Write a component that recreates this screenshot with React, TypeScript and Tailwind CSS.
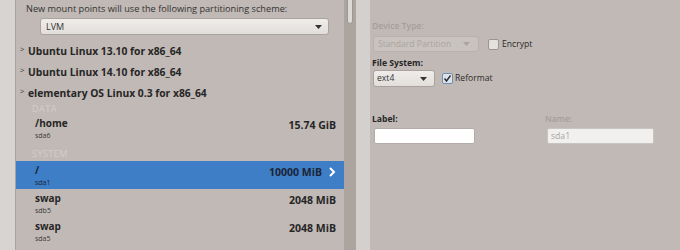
import React from 'react';

const Triangle = ({ className = '' }: { className?: string }) => (
    <svg width="7" height="4" viewBox="0 0 7 4" className={className}>
        <path d="M0 0 L7 0 L3.5 4 Z" fill="currentColor" />
    </svg>
);

const Expander = ({ title, top }: { title: string; top: string }) => (
    <div className={`flex items-center h-[21px] ${top}`}>
        <span className="w-[12px] pl-[4px] text-[8px] leading-none text-[#3a3a3a] -mt-[5px]">&gt;</span>
        <span className="text-[10.3px] font-bold text-[#262626]">{title}</span>
    </div>
);

interface Mount {
    name: string;
    dev: string;
    size: string;
    selected?: boolean;
}

const MountRow = ({ m }: { m: Mount }) => (
    <div className={`flex h-[28px] pl-[19px] ${m.selected ? 'bg-[#3d7ec7] text-[#1b2535]' : 'text-[#262626]'}`}>
        <div className="flex flex-col">
            <span className="text-[10px] font-bold leading-[13px] pt-[3px]">{m.name}</span>
            <span className={`mt-[1px] text-[7px] leading-[10px] ${m.selected ? 'text-[#1b2535]' : 'text-[#3a3a3a]'}`}>{m.dev}</span>
        </div>
        <div className="flex-1" />
        <div className="flex items-start pt-[4px] pr-[8px]">
            <span className="text-[10.5px] font-bold leading-[14px]">{m.size}</span>
            {m.selected && (
                <svg width="8" height="10" viewBox="0 0 8 10" className="ml-[6px] mt-[2px]">
                    <path d="M2 1 L6 5 L2 9" stroke="white" strokeWidth="2" fill="none" />
                </svg>
            )}
        </div>
    </div>
);

const Checkbox = ({ checked }: { checked?: boolean }) => (
    <div className={`w-[11px] h-[11px] rounded-[2px] border ${checked ? 'border-[#6f8fb3] bg-[#dde3ea]' : 'border-[#9b9491] bg-[#e4e0dd]'} flex items-center justify-center`}>
        {checked && (
            <svg width="9" height="9" viewBox="0 0 9 9">
                <path d="M1.5 4.5 L3.5 7 L7.5 1.5" stroke="#2b2b2b" strokeWidth="1.4" fill="none" />
            </svg>
        )}
    </div>
);

export default function App() {
    const mounts: Mount[] = [
        { name: '/', dev: 'sda1', size: '10000 MiB', selected: true },
        { name: 'swap', dev: 'sdb5', size: '2048 MiB' },
        { name: 'swap', dev: 'sda5', size: '2048 MiB' },
    ];

    return (
        <div className="flex w-[680px] h-[250px] overflow-hidden bg-[#c1b9b5] font-['Open_Sans',sans-serif]">
            {/* outer window strip */}
            <div className="w-[16px] bg-[#d8d4d1] border-r border-[#a9a29e]" />

            {/* mount point list */}
            <div className="w-[328px] flex flex-col">
                <div className="pl-[10px] pt-[2px] text-[9.2px] leading-[13px] text-[#333]">
                    New mount points will use the following partitioning scheme:
                </div>
                <div className="ml-[24px] mt-[3px] w-[289px] h-[17px] rounded-[3px] border border-[#aaa39f] bg-gradient-to-b from-[#efecea] to-[#e2dedb] flex items-center px-[5px]">
                    <span className="text-[9px] text-[#333]">LVM</span>
                    <div className="flex-1" />
                    <Triangle className="text-[#333] mr-[1px]" />
                </div>
                <Expander title="Ubuntu Linux 13.10 for x86_64" top="mt-[6px]" />
                <Expander title="Ubuntu Linux 14.10 for x86_64" top="" />
                <Expander title="elementary OS Linux 0.3 for x86_64" top="" />
                <div className="pl-[16px] h-[10px] text-[9px] tracking-[0.5px] leading-[10px] text-[#d4cdc9]">DATA</div>
                <MountRow m={{ name: '/home', dev: 'sda6', size: '15.74 GiB' }} />
                <div className="pl-[16px] pt-[7px] h-[19px] text-[9px] tracking-[0.5px] leading-[10px] text-[#d4cdc9]">SYSTEM</div>
                {mounts.map((m, i) => (
                    <MountRow key={i} m={m} />
                ))}
            </div>

            {/* scrollbar */}
            <div className="w-[12px] bg-[#aba49f] flex justify-center">
                <div className="w-[6px] h-[26px] -mt-[2px] rounded-b-[3px] bg-[#ddd9d6] border border-[#9d9692]" />
            </div>

            {/* pane divider */}
            <div className="w-[14px] bg-[#d4d0cd]" />

            {/* details */}
            <div className="flex-1 flex flex-col pl-[2px] pt-[21px]">
                <div className="text-[8.6px] leading-[10px] font-semibold text-[#a59e9a]">Device Type:</div>
                <div className="flex items-center mt-[5px] ml-[1px]">
                    <div className="w-[106px] h-[16px] rounded-[3px] border border-[#b8b1ad] bg-[#c9c3bf] flex items-center px-[4px]">
                        <span className="text-[8.6px] text-[#aaa39f]">Standard Partition</span>
                        <div className="flex-1" />
                        <Triangle className="text-[#aaa39f] mr-[4px]" />
                    </div>
                    <div className="ml-[9px]">
                        <Checkbox />
                    </div>
                    <span className="ml-[3px] text-[8.6px] text-[#2b2b2b]">Encrypt</span>
                </div>
                <div className="mt-[6px] text-[8.6px] leading-[10px] font-bold text-[#262626]">File System:</div>
                <div className="flex items-center mt-[2px] ml-[1px]">
                    <div className="w-[62px] h-[17px] rounded-[3px] border border-[#a9a29e] bg-gradient-to-b from-[#efecea] to-[#e2dedb] flex items-center px-[3px]">
                        <span className="text-[8.6px] text-[#333]">ext4</span>
                        <div className="flex-1" />
                        <Triangle className="text-[#333] mr-[4px]" />
                    </div>
                    <div className="ml-[7px]">
                        <Checkbox checked />
                    </div>
                    <span className="ml-[2px] text-[8.6px] text-[#2b2b2b]">Reformat</span>
                </div>
                <div className="flex mt-[27px]">
                    <div className="w-[173px] flex flex-col">
                        <span className="text-[8.6px] leading-[10px] font-bold text-[#262626]">Label:</span>
                        <div className="mt-[4px] ml-[2px] w-[101px] h-[16px] bg-white border border-[#b3aca8] rounded-[2px]" />
                    </div>
                    <div className="flex flex-col">
                        <span className="text-[8.6px] leading-[10px] font-semibold text-[#a59e9a]">Name:</span>
                        <div className="mt-[4px] ml-[2px] w-[107px] h-[16px] bg-[#f1f0ef] border border-[#c9c4c1] rounded-[2px] flex items-center px-[3px]">
                            <span className="text-[8.6px] text-[#a9a4a1]">sda1</span>
                        </div>
                    </div>
                </div>
            </div>
        </div>
    );
}
